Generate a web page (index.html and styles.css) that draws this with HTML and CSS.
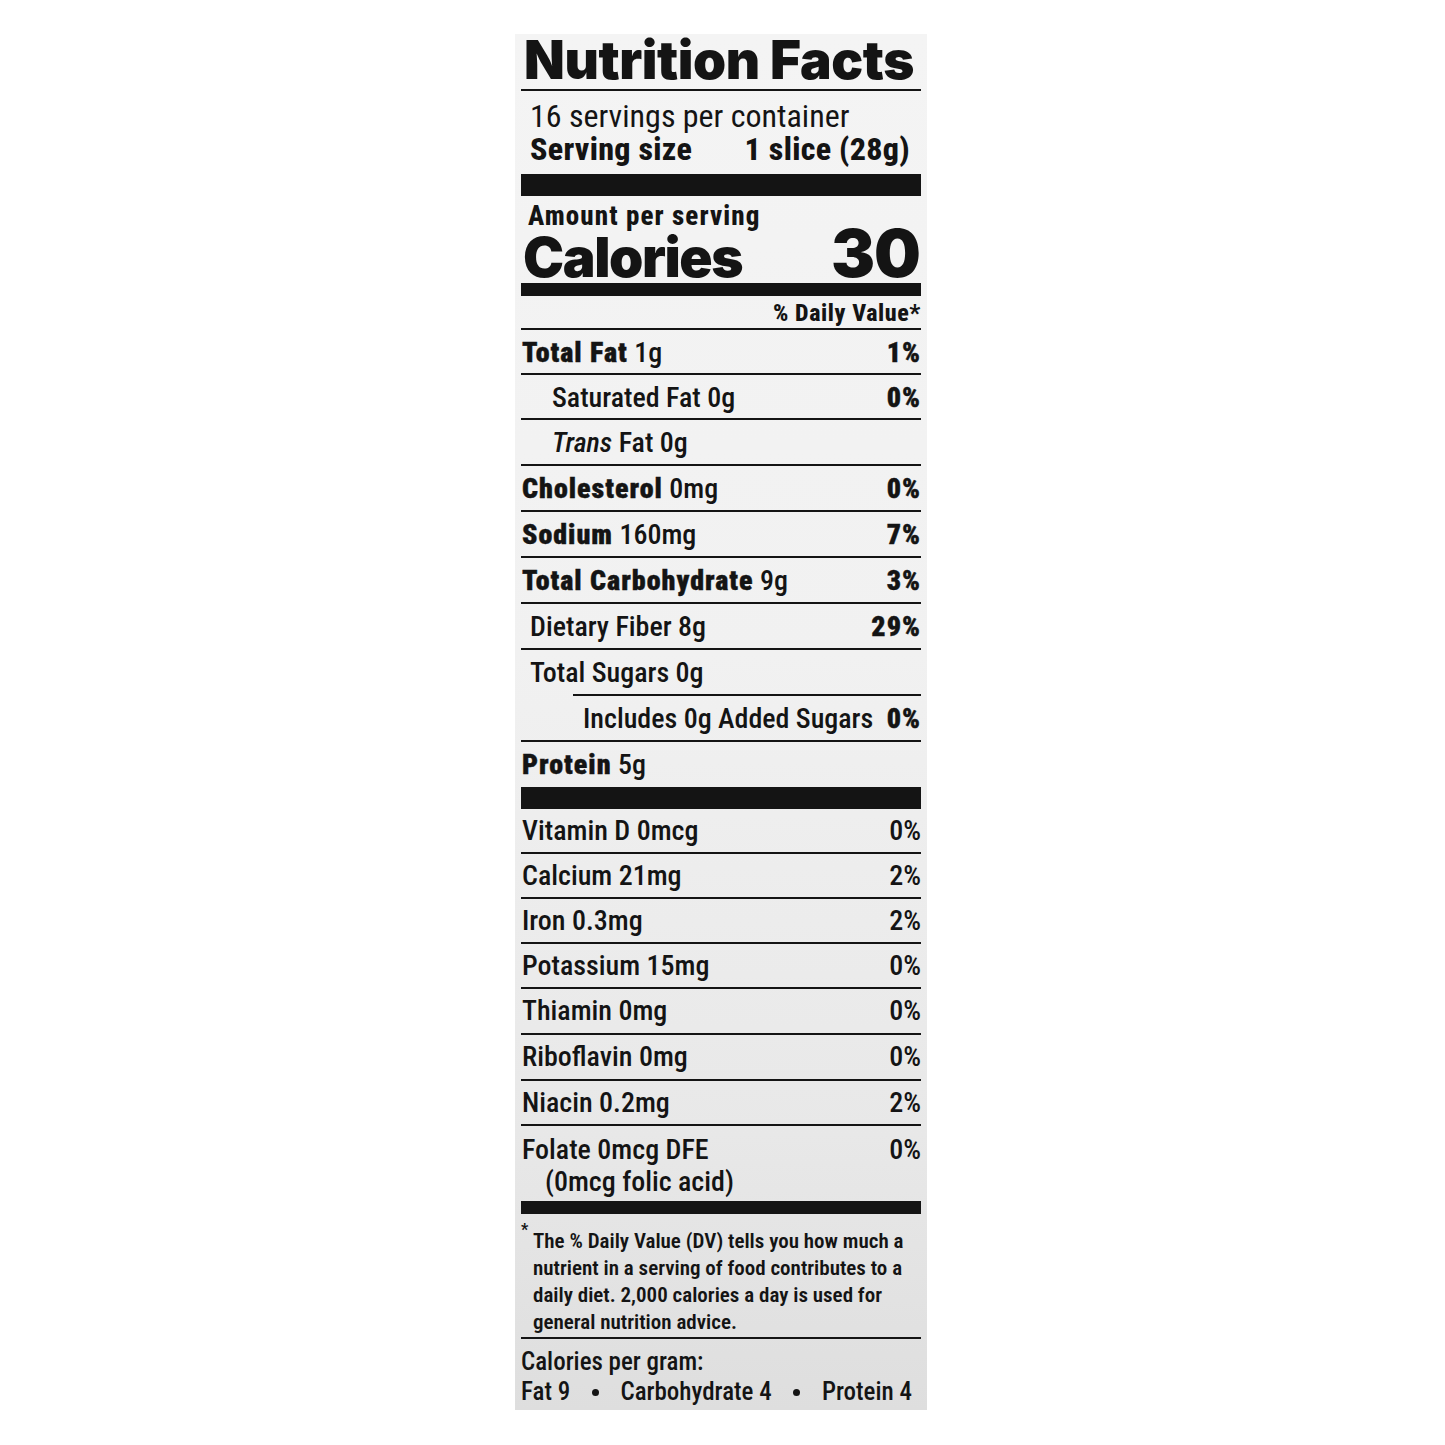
FILE: index.html
```html
<!DOCTYPE html>
<html lang="en">
<head>
<meta charset="utf-8">
<title>Nutrition Facts</title>
<link rel="stylesheet" href="styles.css">
</head>
<body>
<div class="page">
  <section class="label">
    <h1 class="title">Nutrition Facts</h1>
    <div class="servings">
      <p class="per">16 servings per container</p>
      <p class="size"><span>Serving size</span><span>1 slice (28g)</span></p>
    </div>
    <div class="bar bar-xl"></div>
    <div class="cal">
      <p class="amount">Amount per serving</p>
      <p class="cal-row"><span class="cal-name">Calories</span><span class="cal-num">30</span></p>
    </div>
    <div class="bar bar-md"></div>
    <p class="dv-head">% Daily Value*</p>
    <div class="rows">
      <div class="row h45"><span><b>Total Fat</b> 1g</span><b>1%</b></div>
      <div class="row h45 ind1"><span>Saturated Fat 0g</span><b>0%</b></div>
      <div class="row ind1"><span><i>Trans</i> Fat 0g</span></div>
      <div class="row"><span><b>Cholesterol</b> 0mg</span><b>0%</b></div>
      <div class="row"><span><b>Sodium</b> 160mg</span><b>7%</b></div>
      <div class="row"><span><b>Total Carbohydrate</b> 9g</span><b>3%</b></div>
      <div class="row ind2"><span>Dietary Fiber 8g</span><b>29%</b></div>
      <div class="row ind2"><span>Total Sugars 0g</span></div>
      <div class="row added"><span>Includes 0g Added Sugars</span><b>0%</b></div>
      <div class="row h47"><span><b>Protein</b> 5g</span></div>
    </div>
    <div class="bar bar-xl"></div>
    <div class="rows vit">
      <div class="row first"><span>Vitamin D 0mcg</span><span>0%</span></div>
      <div class="row h45"><span>Calcium 21mg</span><span>2%</span></div>
      <div class="row h45"><span>Iron 0.3mg</span><span>2%</span></div>
      <div class="row h45"><span>Potassium 15mg</span><span>0%</span></div>
      <div class="row"><span>Thiamin 0mg</span><span>0%</span></div>
      <div class="row"><span>Riboflavin 0mg</span><span>0%</span></div>
      <div class="row h45"><span>Niacin 0.2mg</span><span>2%</span></div>
      <div class="row folate"><span>Folate 0mcg DFE<br><span class="sub">(0mcg folic acid)</span></span><span>0%</span></div>
    </div>
    <div class="bar bar-md"></div>
    <div class="foot">
      <span class="ast">*</span>
      <p>The % Daily Value (DV) tells you how much a<br>nutrient in a serving of food contributes to a<br>daily diet. 2,000 calories a day is used for<br>general nutrition advice.</p>
    </div>
    <div class="cpg">
      <p>Calories per gram:</p>
      <p class="cpg-row"><span>Fat 9</span><span class="dot"></span><span>Carbohydrate 4</span><span class="dot"></span><span>Protein 4</span></p>
    </div>
  </section>
</div>
</body>
</html>
```

FILE: styles.css
```css
* { box-sizing: border-box; margin: 0; padding: 0; }

:root {
  --cond: "Roboto Condensed", "Liberation Sans Narrow", "Liberation Sans", Arial, sans-serif;
  --heavy: "Inter", "Liberation Sans", Arial, sans-serif;
  --ink: #141414;
}

body {
  background: #ffffff;
  color: var(--ink);
  font-family: var(--cond);
}

.page {
  padding: 34px 0 0 515px;
}

.label {
  width: 412px;
  height: 1376px;
  padding: 0 6px;
  background: linear-gradient(180deg, #f4f4f4 0%, #f1f1f1 45%, #e8e8e8 80%, #dedede 100%);
}

.title {
  font-family: var(--heavy);
  font-weight: 900;
  font-size: 53px;
  line-height: 50px;
  letter-spacing: -0.4px;
  height: 57px;
  padding: 1px 0 0 3px;
  border-bottom: 2px solid var(--ink);
  white-space: nowrap;
}

.servings {
  height: 83px;
  padding: 9px 11px 0 9px;
  font-size: 32px;
  line-height: 33px;
  font-weight: 400;
}

.size {
  display: flex;
  justify-content: space-between;
  font-weight: 800;
  letter-spacing: 0.3px;
}

.bar { background: var(--ink); }
.bar-xl { height: 22px; }
.bar-md { height: 13px; }

.cal {
  height: 87px;
  padding: 5px 1px 0 7px;
}

.amount {
  font-weight: 800;
  font-size: 27px;
  line-height: 30px;
  letter-spacing: 1.1px;
}

.cal-row {
  display: flex;
  justify-content: space-between;
  align-items: baseline;
  font-family: var(--heavy);
  font-weight: 900;
  height: 52px;
  line-height: 44px;
  margin-left: -5px;
}

.cal-name { font-size: 55px; letter-spacing: -1.4px; }
.cal-num { font-size: 66px; letter-spacing: -1px; }

.dv-head {
  height: 32px;
  padding-top: 4px;
  text-align: right;
  font-weight: 800;
  font-size: 24px;
  line-height: 26px;
  letter-spacing: 0.6px;
}

.row {
  display: flex;
  justify-content: space-between;
  height: 46px;
  border-top: 2px solid var(--ink);
  padding: 7px 0 0 1px;
  font-size: 28px;
  font-weight: 500;
  line-height: 32px;
  white-space: nowrap;
}

.row b {
  font-weight: 900;
  letter-spacing: 1px;
  -webkit-text-stroke: 0.4px var(--ink);
}
.row.h45 { height: 45px; }
.row.h47 { height: 47px; }
.row.ind1 { padding-left: 31px; }
.row.ind2 { padding-left: 9px; }
.row.added { margin-left: 52px; padding-left: 10px; }

.vit .row.first {
  border-top: 0;
  height: 43px;
  padding-top: 6px;
}

.vit .row { padding-top: 6px; }

.row.folate { height: 77px; padding-top: 8px; }
.sub { padding-left: 23px; }

.foot {
  display: flex;
  height: 125px;
  padding: 14px 0 0 0;
  border-bottom: 2px solid var(--ink);
  font-size: 21px;
  line-height: 27px;
  font-weight: 600;
}

.ast {
  width: 12px;
  font-size: 16px;
  line-height: 4px;
  font-weight: 700;
}

.cpg {
  padding: 8px 9px 0 0;
  font-size: 25px;
  line-height: 30px;
  font-weight: 500;
}

.cpg-row {
  display: flex;
  justify-content: space-between;
  align-items: center;
}

.dot {
  width: 7px;
  height: 7px;
  border-radius: 50%;
  background: var(--ink);
}
```
